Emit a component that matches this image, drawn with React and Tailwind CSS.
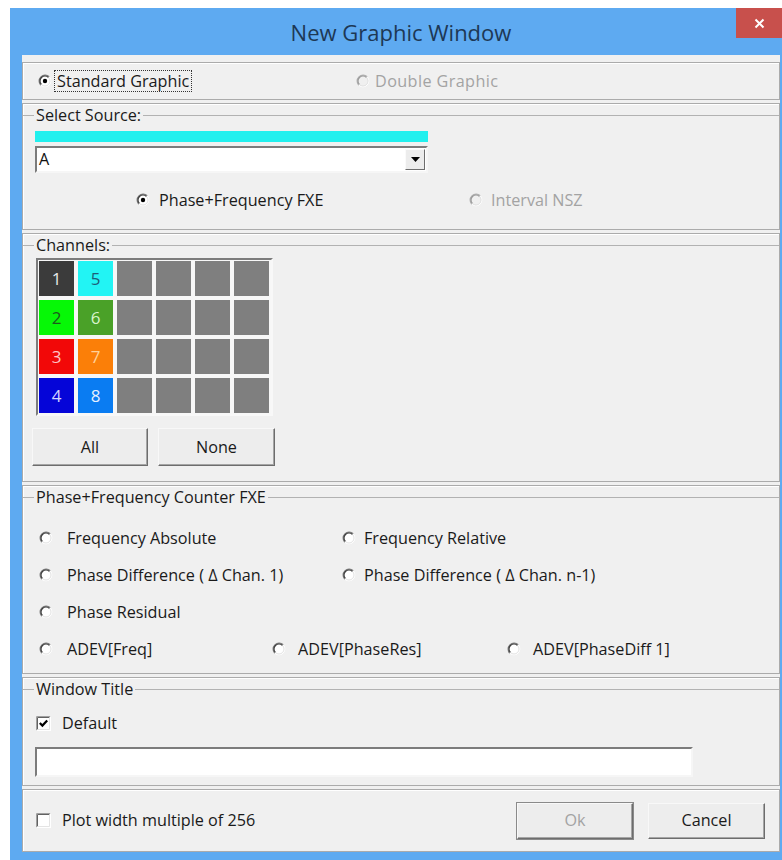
import React from "react";

// Classic etched radio button
function Radio({ checked = false, disabled = false }) {
  return (
    <svg width="14" height="14" viewBox="0 0 14 14" className="shrink-0">
      <circle cx="7" cy="7" r="6" fill={disabled ? "#f0f0f0" : "#ffffff"} />
      <path d="M11.24 2.76 A6 6 0 0 0 2.76 11.24" stroke={disabled ? "#b0b0b0" : "#7a7a7a"} fill="none" strokeWidth="1.2" />
      <path d="M10.54 3.46 A5 5 0 0 0 3.46 10.54" stroke={disabled ? "#999999" : "#3c3c3c"} fill="none" strokeWidth="1.2" />
      <path d="M2.76 11.24 A6 6 0 0 0 11.24 2.76" stroke="#ffffff" fill="none" strokeWidth="1" />
      <path d="M3.46 10.54 A5 5 0 0 0 10.54 3.46" stroke="#e2e2e2" fill="none" strokeWidth="1" />
      {checked && <circle cx="7" cy="7" r="2.2" fill="#000000" />}
    </svg>
  );
}

// Classic sunken check box
function Check({ checked = false }) {
  return (
    <svg width="15" height="15" viewBox="0 0 15 15" className="shrink-0">
      <rect x="0" y="0" width="15" height="15" fill="#ffffff" />
      <path d="M0.5 14.5 V0.5 H14.5" stroke="#a0a0a0" fill="none" />
      <path d="M1.5 13.5 V1.5 H13.5" stroke="#626262" fill="none" />
      <path d="M0.5 14.5 H14.5 V0.5" stroke="#ffffff" fill="none" />
      <path d="M1.5 13.5 H13.5 V1.5" stroke="#e4e4e4" fill="none" />
      {checked && (
        <path d="M3.8 7 L6.4 9.6 L11.2 4.6" stroke="#000000" strokeWidth="2.2" fill="none" />
      )}
    </svg>
  );
}

function Panel({ className = "", children }) {
  return (
    <div className={"border border-[#ababab] shadow-[inset_1px_1px_0_#ffffff] shrink-0 " + className}>
      {children}
    </div>
  );
}

function Group({ title, className = "", children }) {
  return (
    <fieldset className={"border-t border-[#b2b2b2] mx-0 px-0 " + className}>
      <legend className="ml-[11px] px-[2px] leading-[20px]">{title}</legend>
      {children}
    </fieldset>
  );
}

function Button({ children, disabled = false, strong = false, className = "" }) {
  return (
    <div
      className={
        "flex items-center justify-center bg-[#ededed] border border-t-[#f8f8f8] border-l-[#f8f8f8] border-r-[#6d6d6d] border-b-[#6d6d6d] shadow-[inset_-1px_-1px_0_#a5a5a5] " +
        (strong ? "outline outline-1 outline-[#8a8a8a] " : "") +
        (disabled ? "text-[#a3a3a3] " : "text-[#1a1a1a] ") +
        className
      }
    >
      {children}
    </div>
  );
}

const channels = [
  [
    { n: "1", bg: "bg-[#3b3b3b]", fg: "text-[#e8e8e8]" },
    { n: "5", bg: "bg-[#22f4f4]", fg: "text-[#1d5d7a]" },
  ],
  [
    { n: "2", bg: "bg-[#06f806]", fg: "text-[#1d5a1d]" },
    { n: "6", bg: "bg-[#4aa128]", fg: "text-[#d8f4cc]" },
  ],
  [
    { n: "3", bg: "bg-[#f20808]", fg: "text-[#ffc6c6]" },
    { n: "7", bg: "bg-[#fb7f08]", fg: "text-[#ffd19a]" },
  ],
  [
    { n: "4", bg: "bg-[#0505d8]", fg: "text-[#d6d6ff]" },
    { n: "8", bg: "bg-[#0a7cf2]", fg: "text-[#e4f0ff]" },
  ],
];

export default function App() {
  return (
    <div className="w-[782px] h-[860px] bg-white overflow-hidden font-['Open_Sans',sans-serif] text-[16.2px] text-[#1a1a1a]">
      <div className="ml-[10px] mt-[8px] w-[772px] h-[852px] bg-[#5eaaf1] flex flex-col">
        {/* Title bar */}
        <div className="h-[47px] relative flex items-center justify-center pl-[12px] pr-[2px] shrink-0">
          <span className="text-[22px] text-[#1d3855] pt-[1px]">New Graphic Window</span>
          <div className="absolute right-0 top-0 w-[46px] h-[30px] bg-[#c8504c] flex items-center justify-center">
            <svg width="11" height="11" viewBox="0 0 11 11">
              <path d="M1.5 1.5 L9.5 9.5 M9.5 1.5 L1.5 9.5" stroke="#ffffff" strokeWidth="2" />
            </svg>
          </div>
        </div>

        {/* Client area */}
        <div className="ml-[12px] mr-[2px] h-[797px] bg-[#f0f0f0] flex flex-col gap-[3px] pt-[7px] overflow-hidden">
          {/* Graphic kind */}
          <Panel className="h-[38px] flex items-center pl-[15px]">
            <div className="w-[318px] flex items-center">
              <Radio checked />
              <span className="ml-[2px] px-[2px] border border-dotted border-[#333] leading-[20px]">Standard Graphic</span>
            </div>
            <div className="flex items-center text-[#a3a3a3]">
              <Radio disabled />
              <span className="ml-[5px] tracking-[0.4px]">Double Graphic</span>
            </div>
          </Panel>

          {/* Source */}
          <Panel className="h-[127px]">
            <Group title="Select Source:" className="mt-[1px]">
              <div className="ml-[12px] mt-[6px] w-[393px] h-[11px] bg-[#22f0ee]" />
              <div className="ml-[12px] mt-[4px] w-[393px] h-[27px] bg-white border-2 border-t-[#7c7c7c] border-l-[#7c7c7c] border-r-[#f6f6f6] border-b-[#f6f6f6] flex items-center justify-between">
                <span className="ml-[2px] text-[#111]">A</span>
                <div className="mr-[1px] w-[20px] h-[21px] bg-[#ececec] border border-t-[#fafafa] border-l-[#fafafa] border-r-[#6d6d6d] border-b-[#6d6d6d] flex items-center justify-center">
                  <svg width="9" height="5" viewBox="0 0 9 5">
                    <path d="M0 0 H9 L4.5 5 Z" fill="#000" />
                  </svg>
                </div>
              </div>
              <div className="mt-[17px] h-[20px] flex items-center pl-[113px]">
                <div className="w-[333px] flex items-center">
                  <Radio checked />
                  <span className="ml-[9px]">Phase+Frequency FXE</span>
                </div>
                <div className="flex items-center text-[#a3a3a3]">
                  <Radio disabled />
                  <span className="ml-[8px]">Interval NSZ</span>
                </div>
              </div>
            </Group>
          </Panel>

          {/* Channels */}
          <Panel className="h-[249px]">
            <Group title="Channels:" className="mt-[1px]">
              <div className="ml-[13px] mt-[3px] w-[237px] border-2 border-t-[#7c7c7c] border-l-[#7c7c7c] border-r-[#f8f8f8] border-b-[#f8f8f8] bg-[#f7f7f7] pt-[1px] pl-[1px] pr-[2px] pb-[1px] grid grid-cols-6 gap-[4px]">
                {channels.map((row, r) => (
                  <React.Fragment key={r}>
                    {row.map((c) => (
                      <div key={c.n} className={"h-[35px] flex items-center justify-center text-[17px] " + c.bg + " " + c.fg}>
                        {c.n}
                      </div>
                    ))}
                    {[0, 1, 2, 3].map((k) => (
                      <div key={"g" + r + k} className="h-[35px] bg-[#7f7f7f]" />
                    ))}
                  </React.Fragment>
                ))}
              </div>
              <div className="ml-[9px] mt-[12px] flex gap-[10px]">
                <Button className="w-[116px] h-[38px]">All</Button>
                <Button className="w-[117px] h-[38px]">None</Button>
              </div>
            </Group>
          </Panel>

          {/* Counter measurements */}
          <Panel className="h-[189px]">
            <Group title="Phase+Frequency Counter FXE" className="mt-[1px]">
              <div className="mt-[21px] flex flex-col gap-[17px] pl-[16px]">
                <div className="h-[20px] flex items-center">
                  <div className="w-[303px] flex items-center">
                    <Radio />
                    <span className="ml-[14px]">Frequency Absolute</span>
                  </div>
                  <div className="flex items-center">
                    <Radio />
                    <span className="ml-[8px]">Frequency Relative</span>
                  </div>
                </div>
                <div className="h-[20px] flex items-center">
                  <div className="w-[303px] flex items-center">
                    <Radio />
                    <span className="ml-[14px]">Phase Difference ( Δ Chan. 1)</span>
                  </div>
                  <div className="flex items-center">
                    <Radio />
                    <span className="ml-[8px]">Phase Difference ( Δ Chan. n-1)</span>
                  </div>
                </div>
                <div className="h-[20px] flex items-center">
                  <Radio />
                  <span className="ml-[14px]">Phase Residual</span>
                </div>
                <div className="h-[20px] flex items-center">
                  <div className="w-[233px] flex items-center">
                    <Radio />
                    <span className="ml-[14px]">ADEV[Freq]</span>
                  </div>
                  <div className="w-[235px] flex items-center">
                    <Radio />
                    <span className="ml-[12px]">ADEV[PhaseRes]</span>
                  </div>
                  <div className="flex items-center">
                    <Radio />
                    <span className="ml-[12px]">ADEV[PhaseDiff 1]</span>
                  </div>
                </div>
              </div>
            </Group>
          </Panel>

          {/* Title of the new window */}
          <Panel className="h-[109px]">
            <Group title="Window Title" className="mt-[1px]">
              <div className="mt-[14px] ml-[13px] h-[20px] flex items-center">
                <Check checked />
                <span className="ml-[11px]">Default</span>
              </div>
              <div className="ml-[12px] mt-[14px] w-[658px] h-[30px] bg-white border-2 border-t-[#7c7c7c] border-l-[#7c7c7c] border-r-[#f6f6f6] border-b-[#f6f6f6]" />
            </Group>
          </Panel>

          {/* Footer */}
          <Panel className="h-[63px] flex items-center pl-[13px] pr-[14px]">
            <Check />
            <span className="ml-[11px]">Plot width multiple of 256</span>
            <div className="ml-auto flex gap-[15px]">
              <Button disabled strong className="w-[116px] h-[36px]">Ok</Button>
              <Button className="w-[117px] h-[36px]">Cancel</Button>
            </div>
          </Panel>
        </div>
      </div>
    </div>
  );
}
